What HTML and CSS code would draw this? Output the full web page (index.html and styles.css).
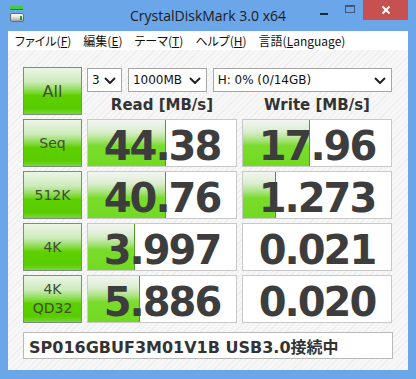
FILE: index.html
```html
<!DOCTYPE html>
<html lang="ja">
<head>
  <meta charset="UTF-8" />
  <meta name="viewport" content="width=device-width, initial-scale=1.0"/>
  <title>CrystalDiskMark 3.0 x64</title>
  <link rel="stylesheet" href="styles.css">
</head>
<body>

  <div class="window">
    <div class="titlebar">
      <div class="app-icon">
        <svg width="16" height="18" viewBox="0 0 16 18">
          <defs>
            <linearGradient id="drive" x1="0" y1="0" x2="0" y2="1">
              <stop offset="0" stop-color="#ffffff"/>
              <stop offset="0.45" stop-color="#e4e4e4"/>
              <stop offset="1" stop-color="#9a9a9a"/>
            </linearGradient>
          </defs>
          <rect x="1" y="1" width="13" height="4" rx="1" fill="#3ccf3c"/>
          <rect x="1" y="4" width="13" height="1" fill="#1c8a28"/>
          <rect x="1.5" y="8.5" width="13" height="8" rx="1.5" fill="url(#drive)" stroke="#6b6b6b"/>
          <rect x="11" y="11" width="2" height="4" fill="#25a025"/>
        </svg>
      </div>
      <div class="title">CrystalDiskMark 3.0 x64</div>
      <div class="controls">
        <span class="ctl ctl-min"><i></i></span>
        <span class="ctl ctl-max"><i></i></span>
        <span class="ctl ctl-close">
          <svg width="10" height="10" viewBox="0 0 10 10">
            <path d="M1.5 1.5 L8.5 8.5 M8.5 1.5 L1.5 8.5" stroke="#fff" stroke-width="2"/>
          </svg>
        </span>
      </div>
    </div>

    <div class="menubar">
      <span class="menu-item">ファイル(<u>F</u>)</span>
      <span class="menu-item">編集(<u>E</u>)</span>
      <span class="menu-item">テーマ(<u>T</u>)</span>
      <span class="menu-item">ヘルプ(<u>H</u>)</span>
      <span class="menu-item">言語(<u>L</u>anguage)</span>
    </div>

    <div class="client">
      <div class="bench">
        <div class="run-btn run-all">All</div>

        <div class="options">
          <div class="combo combo-count">
            <span>3</span>
            <svg class="chevron" width="12" height="7" viewBox="0 0 12 7"><polyline points="1,1 6,6 11,1" fill="none" stroke="#222" stroke-width="2"/></svg>
          </div>
          <div class="combo combo-size">
            <span>1000MB</span>
            <svg class="chevron" width="12" height="7" viewBox="0 0 12 7"><polyline points="1,1 6,6 11,1" fill="none" stroke="#222" stroke-width="2"/></svg>
          </div>
          <div class="combo combo-drive">
            <span>H: 0% (0/14GB)</span>
            <svg class="chevron" width="12" height="7" viewBox="0 0 12 7"><polyline points="1,1 6,6 11,1" fill="none" stroke="#222" stroke-width="2"/></svg>
          </div>
        </div>

        <div class="col-head">Read [MB/s]</div>
        <div class="col-head">Write [MB/s]</div>

        <!-- Seq -->
        <div class="run-btn">Seq</div>
        <div class="result"><div class="bar" style="width:53%"></div><span>44.38</span></div>
        <div class="result"><div class="bar" style="width:45%"></div><span>17.96</span></div>

        <!-- 512K -->
        <div class="run-btn">512K</div>
        <div class="result"><div class="bar" style="width:53%"></div><span>40.76</span></div>
        <div class="result"><div class="bar" style="width:22%"></div><span>1.273</span></div>

        <!-- 4K -->
        <div class="run-btn">4K</div>
        <div class="result"><div class="bar" style="width:32%"></div><span>3.997</span></div>
        <div class="result"><span>0.021</span></div>

        <!-- 4K QD32 -->
        <div class="run-btn run-two">4K<br>QD32</div>
        <div class="result"><div class="bar" style="width:35%"></div><span>5.886</span></div>
        <div class="result"><span>0.020</span></div>
      </div>

      <div class="status">SP016GBUF3M01V1B USB3.0接続中</div>
    </div>
  </div>

</body>
</html>
```

FILE: styles.css
```css
body {
  margin: 0;
  background: #ffffff;
}

.window {
  width: 416px;
  height: 379px;
  box-sizing: border-box;
  padding: 0 8px 9px;
  background: #6ba6e9;
  display: flex;
  flex-direction: column;
}

/* Title bar */
.titlebar {
  height: 31px;
  display: grid;
  grid-template-columns: 1fr auto 1fr;
  align-items: start;
}

.app-icon {
  padding: 5px 0 0 1px;
}

.title {
  padding-top: 6px;
  font-family: "Open Sans", sans-serif;
  font-size: 14px;
  color: #1b1b1b;
}

.controls {
  display: flex;
  justify-content: flex-end;
}

.ctl {
  width: 26px;
  height: 20px;
  display: flex;
  justify-content: center;
  align-items: center;
}

.ctl-min i {
  width: 8px;
  height: 2px;
  margin-top: 7px;
  background: #1e2a3a;
}

.ctl-max i {
  width: 10px;
  height: 8px;
  box-sizing: border-box;
  margin-top: -2px;
  border: 1px solid #3e5678;
  border-top-width: 2px;
}

.ctl-close {
  width: 45px;
  background: #c75050;
}

/* Menu */
.menubar {
  height: 19px;
  background: #ffffff;
  display: flex;
  align-items: center;
  padding-left: 1px;
  font-family: "Noto Sans CJK JP", sans-serif;
  font-feature-settings: "palt";
  font-size: 12px;
  color: #111;
}

.menu-item {
  padding: 0 6px;
}

.menu-item u {
  text-underline-offset: 1px;
}

/* Main area */
.client {
  flex: 1;
  padding: 17px 0 0 15px;
  background: repeating-linear-gradient(135deg, #f7f7f7 0 3px, #eeeeee 3px 4px);
}

.bench {
  display: grid;
  grid-template-columns: 59px 150px 150px;
  grid-template-rows: 25px 19px repeat(4, 48px);
  column-gap: 5px;
  row-gap: 4px;
}

.run-btn {
  box-sizing: border-box;
  border: 1px solid #7f8b7d;
  background: linear-gradient(#ecf6e6 0%, #cdebbb 30%, #90dd56 48%, #5ed000 60%, #58cc00 88%, #78d838 100%);
  display: flex;
  justify-content: center;
  align-items: center;
  text-align: center;
  font-family: "DejaVu Sans", sans-serif;
  font-size: 14px;
  line-height: 19px;
  color: #3e4c35;
}

.run-all {
  grid-row: 1 / 3;
  font-size: 16px;
}

.options {
  grid-column: 2 / 4;
  display: flex;
  gap: 6px;
  align-items: flex-end;
}

.combo {
  height: 24px;
  box-sizing: border-box;
  border: 1px solid #a6a6a6;
  background: #ffffff;
  display: flex;
  align-items: center;
  justify-content: space-between;
  padding: 0 5px 0 4px;
  font-family: "DejaVu Sans", sans-serif;
  font-size: 12px;
  color: #111;
}

.combo-count { width: 35px; }
.combo-size { width: 79px; }
.combo-drive { width: 180px; }

.col-head {
  text-align: center;
  font-family: "DejaVu Sans", sans-serif;
  font-weight: bold;
  font-size: 15px;
  line-height: 19px;
  color: #333;
}

.result {
  position: relative;
  box-sizing: border-box;
  border: 1px solid #c9c9c9;
  background: #ffffff;
  padding-top: 6px;
  text-align: center;
  font-family: "DejaVu Sans", sans-serif;
  font-weight: bold;
  font-size: 40px;
  line-height: 40px;
  letter-spacing: -2px;
  color: #3d3d3d;
}

.result span {
  position: relative;
}

.bar {
  position: absolute;
  top: 0;
  left: 0;
  bottom: 0;
  box-sizing: border-box;
  border-right: 1px solid #4f9e22;
  background: linear-gradient(#f3f5f1 0%, #dbeed0 25%, #a4e276 45%, #7adc2c 56%, #72da22 100%);
}

.status {
  margin-top: 9px;
  width: 370px;
  height: 27px;
  box-sizing: border-box;
  border: 1px solid #b9b9b9;
  background: #ffffff;
  padding-left: 5px;
  display: flex;
  align-items: center;
  font-family: "DejaVu Sans", "Noto Sans CJK JP", sans-serif;
  font-weight: bold;
  font-size: 16px;
  color: #333;
}
```
